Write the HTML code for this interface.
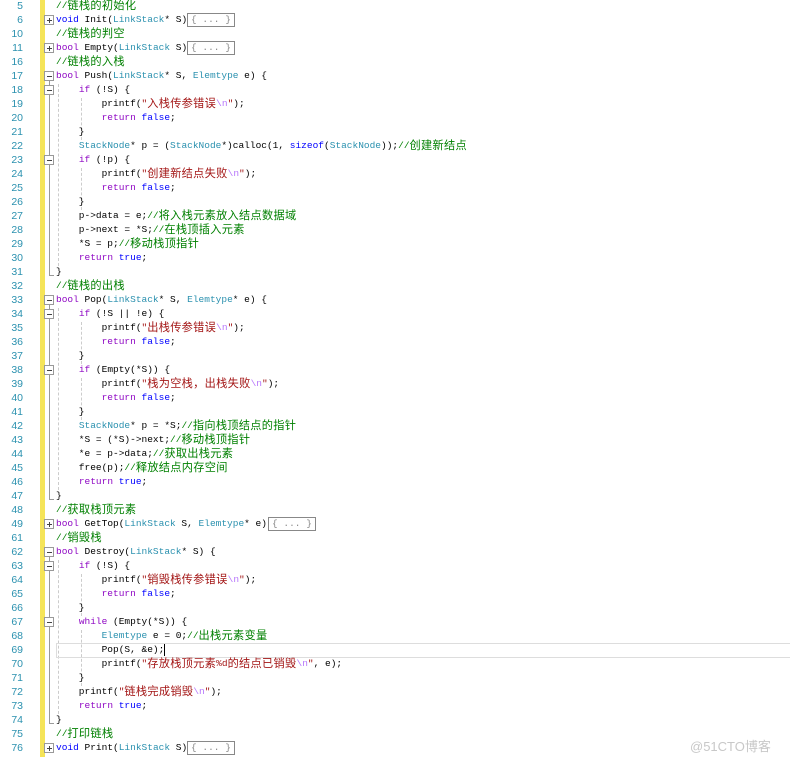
<!DOCTYPE html>
<html><head><meta charset="utf-8"><style>
body{margin:0;width:790px;height:762px;background:#fff;position:relative;overflow:hidden;font-family:"Liberation Mono",monospace;font-size:9.5px}
.n{position:absolute;left:0;width:23px;text-align:right;color:#2b91af;font-family:"Liberation Sans",sans-serif;font-size:10.5px;line-height:14px}
.l{position:absolute;left:56px;white-space:pre;line-height:14px;height:14px;color:#000}
.k{color:#8f08c4}.b{color:#0000ff}.t{color:#2b91af}.s{color:#a31515}.e{color:#b776fb}.m{color:#008000}
.z{font-family:"Noto Sans CJK SC",sans-serif;font-size:11.2px;line-height:0;letter-spacing:0.3px;position:relative;top:1px}
.bx{position:absolute;width:8px;height:8px;border:1px solid #999;background:#fff;left:44px}
.bx:before{content:"";position:absolute;left:2px;top:4px;width:5px;height:1px;background:#444}
.p:after{content:"";position:absolute;left:4px;top:2px;width:1px;height:5px;background:#444}
.v{position:absolute;left:49px;width:1px;background:#999}
.h{position:absolute;left:49px;width:5px;height:1px;background:#999}
.d{position:absolute;width:0;border-left:1px dashed #ccc}
.cb{position:absolute;height:12px;border:1px solid #888;color:#888;line-height:12px;padding:0 3px;white-space:pre}
</style></head><body>
<div style="position:absolute;left:40px;top:0;width:5px;height:757px;background:#f5e458"></div>
<div class="v" style="top:81px;height:195px"></div><div class="h" style="top:275px"></div>
<div class="v" style="top:305px;height:195px"></div><div class="h" style="top:499px"></div>
<div class="v" style="top:557px;height:167px"></div><div class="h" style="top:723px"></div>
<div class="d" style="left:58px;top:84px;height:182px"></div>
<div class="d" style="left:81px;top:98px;height:42px"></div>
<div class="d" style="left:81px;top:168px;height:42px"></div>
<div class="d" style="left:58px;top:308px;height:182px"></div>
<div class="d" style="left:81px;top:322px;height:42px"></div>
<div class="d" style="left:81px;top:378px;height:42px"></div>
<div class="d" style="left:58px;top:560px;height:154px"></div>
<div class="d" style="left:81px;top:574px;height:42px"></div>
<div class="d" style="left:81px;top:630px;height:56px"></div>
<div style="position:absolute;left:56px;top:643px;width:734px;height:13px;border:1px solid #ddd;border-right:none"></div>
<div style="position:absolute;left:164px;top:644px;width:1px;height:12px;background:#000"></div>

<div class="bx p" style="top:15px"></div><div class="bx p" style="top:43px"></div>
<div class="bx" style="top:71px"></div><div class="bx" style="top:85px"></div><div class="bx" style="top:155px"></div>
<div class="bx" style="top:295px"></div><div class="bx" style="top:309px"></div><div class="bx" style="top:365px"></div>
<div class="bx p" style="top:519px"></div><div class="bx" style="top:547px"></div><div class="bx" style="top:561px"></div>
<div class="bx" style="top:617px"></div><div class="bx p" style="top:743px"></div>

<div class="n" style="top:-1px">5</div><div class="l" style="top:-1px"><span class="m">//<span class="z">链栈的初始化</span></span></div>
<div class="n" style="top:13px">6</div><div class="l" style="top:13px"><span class="b">void</span> Init(<span class="t">LinkStack</span>* S)</div><div class="cb" style="left:187px;top:13px">{ ... }</div>
<div class="n" style="top:27px">10</div><div class="l" style="top:27px"><span class="m">//<span class="z">链栈的判空</span></span></div>
<div class="n" style="top:41px">11</div><div class="l" style="top:41px"><span class="k">bool</span> Empty(<span class="t">LinkStack</span> S)</div><div class="cb" style="left:187px;top:41px">{ ... }</div>
<div class="n" style="top:55px">16</div><div class="l" style="top:55px"><span class="m">//<span class="z">链栈的入栈</span></span></div>
<div class="n" style="top:69px">17</div><div class="l" style="top:69px"><span class="k">bool</span> Push(<span class="t">LinkStack</span>* S, <span class="t">Elemtype</span> e) {</div>
<div class="n" style="top:83px">18</div><div class="l" style="top:83px">    <span class="k">if</span> (!S) {</div>
<div class="n" style="top:97px">19</div><div class="l" style="top:97px">        printf(<span class="s">"<span class="z">入栈传参错误</span><span class="e">\n</span>"</span>);</div>
<div class="n" style="top:111px">20</div><div class="l" style="top:111px">        <span class="k">return</span> <span class="b">false</span>;</div>
<div class="n" style="top:125px">21</div><div class="l" style="top:125px">    }</div>
<div class="n" style="top:139px">22</div><div class="l" style="top:139px">    <span class="t">StackNode</span>* p = (<span class="t">StackNode</span>*)calloc(1, <span class="b">sizeof</span>(<span class="t">StackNode</span>));<span class="m">//<span class="z">创建新结点</span></span></div>
<div class="n" style="top:153px">23</div><div class="l" style="top:153px">    <span class="k">if</span> (!p) {</div>
<div class="n" style="top:167px">24</div><div class="l" style="top:167px">        printf(<span class="s">"<span class="z">创建新结点失败</span><span class="e">\n</span>"</span>);</div>
<div class="n" style="top:181px">25</div><div class="l" style="top:181px">        <span class="k">return</span> <span class="b">false</span>;</div>
<div class="n" style="top:195px">26</div><div class="l" style="top:195px">    }</div>
<div class="n" style="top:209px">27</div><div class="l" style="top:209px">    p-&gt;data = e;<span class="m">//<span class="z">将入栈元素放入结点数据域</span></span></div>
<div class="n" style="top:223px">28</div><div class="l" style="top:223px">    p-&gt;next = *S;<span class="m">//<span class="z">在栈顶插入元素</span></span></div>
<div class="n" style="top:237px">29</div><div class="l" style="top:237px">    *S = p;<span class="m">//<span class="z">移动栈顶指针</span></span></div>
<div class="n" style="top:251px">30</div><div class="l" style="top:251px">    <span class="k">return</span> <span class="b">true</span>;</div>
<div class="n" style="top:265px">31</div><div class="l" style="top:265px">}</div>
<div class="n" style="top:279px">32</div><div class="l" style="top:279px"><span class="m">//<span class="z">链栈的出栈</span></span></div>
<div class="n" style="top:293px">33</div><div class="l" style="top:293px"><span class="k">bool</span> Pop(<span class="t">LinkStack</span>* S, <span class="t">Elemtype</span>* e) {</div>
<div class="n" style="top:307px">34</div><div class="l" style="top:307px">    <span class="k">if</span> (!S || !e) {</div>
<div class="n" style="top:321px">35</div><div class="l" style="top:321px">        printf(<span class="s">"<span class="z">出栈传参错误</span><span class="e">\n</span>"</span>);</div>
<div class="n" style="top:335px">36</div><div class="l" style="top:335px">        <span class="k">return</span> <span class="b">false</span>;</div>
<div class="n" style="top:349px">37</div><div class="l" style="top:349px">    }</div>
<div class="n" style="top:363px">38</div><div class="l" style="top:363px">    <span class="k">if</span> (Empty(*S)) {</div>
<div class="n" style="top:377px">39</div><div class="l" style="top:377px">        printf(<span class="s">"<span class="z">栈为空栈，出栈失败</span><span class="e">\n</span>"</span>);</div>
<div class="n" style="top:391px">40</div><div class="l" style="top:391px">        <span class="k">return</span> <span class="b">false</span>;</div>
<div class="n" style="top:405px">41</div><div class="l" style="top:405px">    }</div>
<div class="n" style="top:419px">42</div><div class="l" style="top:419px">    <span class="t">StackNode</span>* p = *S;<span class="m">//<span class="z">指向栈顶结点的指针</span></span></div>
<div class="n" style="top:433px">43</div><div class="l" style="top:433px">    *S = (*S)-&gt;next;<span class="m">//<span class="z">移动栈顶指针</span></span></div>
<div class="n" style="top:447px">44</div><div class="l" style="top:447px">    *e = p-&gt;data;<span class="m">//<span class="z">获取出栈元素</span></span></div>
<div class="n" style="top:461px">45</div><div class="l" style="top:461px">    free(p);<span class="m">//<span class="z">释放结点内存空间</span></span></div>
<div class="n" style="top:475px">46</div><div class="l" style="top:475px">    <span class="k">return</span> <span class="b">true</span>;</div>
<div class="n" style="top:489px">47</div><div class="l" style="top:489px">}</div>
<div class="n" style="top:503px">48</div><div class="l" style="top:503px"><span class="m">//<span class="z">获取栈顶元素</span></span></div>
<div class="n" style="top:517px">49</div><div class="l" style="top:517px"><span class="k">bool</span> GetTop(<span class="t">LinkStack</span> S, <span class="t">Elemtype</span>* e)</div><div class="cb" style="left:268px;top:517px">{ ... }</div>
<div class="n" style="top:531px">61</div><div class="l" style="top:531px"><span class="m">//<span class="z">销毁栈</span></span></div>
<div class="n" style="top:545px">62</div><div class="l" style="top:545px"><span class="k">bool</span> Destroy(<span class="t">LinkStack</span>* S) {</div>
<div class="n" style="top:559px">63</div><div class="l" style="top:559px">    <span class="k">if</span> (!S) {</div>
<div class="n" style="top:573px">64</div><div class="l" style="top:573px">        printf(<span class="s">"<span class="z">销毁栈传参错误</span><span class="e">\n</span>"</span>);</div>
<div class="n" style="top:587px">65</div><div class="l" style="top:587px">        <span class="k">return</span> <span class="b">false</span>;</div>
<div class="n" style="top:601px">66</div><div class="l" style="top:601px">    }</div>
<div class="n" style="top:615px">67</div><div class="l" style="top:615px">    <span class="k">while</span> (Empty(*S)) {</div>
<div class="n" style="top:629px">68</div><div class="l" style="top:629px">        <span class="t">Elemtype</span> e = 0;<span class="m">//<span class="z">出栈元素变量</span></span></div>
<div class="n" style="top:643px">69</div><div class="l" style="top:643px">        Pop(S, &amp;e);</div>
<div class="n" style="top:657px">70</div><div class="l" style="top:657px">        printf(<span class="s">"<span class="z">存放栈顶元素</span>%d<span class="z">的结点已销毁</span><span class="e">\n</span>"</span>, e);</div>
<div class="n" style="top:671px">71</div><div class="l" style="top:671px">    }</div>
<div class="n" style="top:685px">72</div><div class="l" style="top:685px">    printf(<span class="s">"<span class="z">链栈完成销毁</span><span class="e">\n</span>"</span>);</div>
<div class="n" style="top:699px">73</div><div class="l" style="top:699px">    <span class="k">return</span> <span class="b">true</span>;</div>
<div class="n" style="top:713px">74</div><div class="l" style="top:713px">}</div>
<div class="n" style="top:727px">75</div><div class="l" style="top:727px"><span class="m">//<span class="z">打印链栈</span></span></div>
<div class="n" style="top:741px">76</div><div class="l" style="top:741px"><span class="b">void</span> Print(<span class="t">LinkStack</span> S)</div><div class="cb" style="left:187px;top:741px">{ ... }</div>
<div style="position:absolute;left:690px;top:736px;color:#c8c8c8;font-family:'Liberation Sans','Noto Sans CJK SC',sans-serif;font-size:13px">@51CTO博客</div>
</body></html>
